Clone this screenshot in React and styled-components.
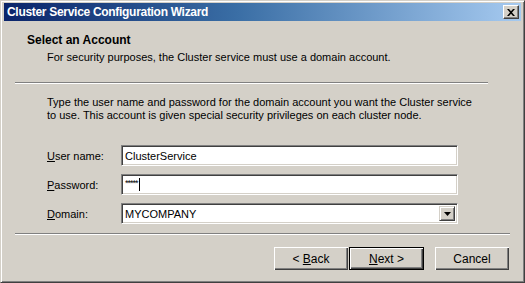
import React from "react";
import styled, { createGlobalStyle } from "styled-components";

const GlobalStyle = createGlobalStyle`
  html, body {
    margin: 0;
    padding: 0;
    background: #d4d0c8;
  }
  * {
    box-sizing: border-box;
  }
`;

const Window = styled.div`
  width: 525px;
  height: 283px;
  display: flex;
  flex-direction: column;
  background: #d4d0c8;
  border-top: 1px solid #d4d0c8;
  border-left: 1px solid #d4d0c8;
  border-right: 1px solid #404040;
  border-bottom: 1px solid #404040;
  box-shadow: inset 1px 1px 0 #ffffff, inset -1px -1px 0 #808080;
  padding: 2px 3px 3px 3px;
  font-family: "Liberation Sans", Arial, sans-serif;
  font-size: 11px;
  color: #000;
  overflow: hidden;
`;

const TitleBar = styled.div`
  height: 18px;
  flex: none;
  display: flex;
  align-items: center;
  justify-content: space-between;
  padding: 0 2px 0 2px;
  background: linear-gradient(to right, #0a246a 0%, #3a6ea5 45%, #a6caf0 100%);
`;

const TitleText = styled.span`
  color: #fff;
  font-weight: bold;
  font-size: 12px;
  letter-spacing: -0.3px;
  padding-left: 1px;
`;

const CloseButton = styled.div`
  width: 16px;
  height: 14px;
  background: #d4d0c8;
  border-top: 1px solid #ffffff;
  border-left: 1px solid #ffffff;
  border-right: 1px solid #404040;
  border-bottom: 1px solid #404040;
  box-shadow: inset -1px -1px 0 #808080;
  display: flex;
  align-items: center;
  justify-content: center;
`;

const Header = styled.div`
  padding: 11px 0 0 23px;
  height: 61px;
  flex: none;
`;

const Heading = styled.div`
  font-weight: bold;
  font-size: 12px;
  line-height: 16px;
`;

const SubHeading = styled.div`
  padding-left: 20px;
  margin-top: 2px;
  line-height: 14px;
`;

const Rule = styled.div`
  flex: none;
  margin-left: 11px;
  width: ${(p) => p.$width}px;
  height: 2px;
  border-top: 1px solid #808080;
  border-bottom: 1px solid #ffffff;
`;

const Body = styled.div`
  padding: 12px 0 9px 43px;
  flex: none;
`;

const Intro = styled.p`
  margin: 0;
  white-space: nowrap;
  line-height: 13px;
`;

const Form = styled.div`
  margin-top: 23px;
  display: grid;
  grid-template-columns: 74px 337px;
  row-gap: 8px;
  align-items: center;
`;

const Label = styled.label`
  line-height: 14px;
`;

const Field = styled.div`
  height: 21px;
  background: #fff;
  border-top: 1px solid #808080;
  border-left: 1px solid #808080;
  border-right: 1px solid #ffffff;
  border-bottom: 1px solid #ffffff;
  box-shadow: inset 1px 1px 0 #404040, inset -1px -1px 0 #d4d0c8;
  display: flex;
  align-items: center;
  padding-left: 3px;
  position: relative;
`;

const Caret = styled.span`
  display: inline-block;
  width: 1px;
  height: 13px;
  background: #000;
  margin-left: 1px;
`;

const Stars = styled.span`
  font-size: 9px;
  letter-spacing: -1px;
  position: relative;
  top: -2px;
`;

const DropButton = styled.div`
  position: absolute;
  right: 2px;
  top: 2px;
  width: 16px;
  height: 15px;
  background: #d4d0c8;
  border-top: 1px solid #d4d0c8;
  border-left: 1px solid #d4d0c8;
  border-right: 1px solid #404040;
  border-bottom: 1px solid #404040;
  box-shadow: inset 1px 1px 0 #fff, inset -1px -1px 0 #808080;
  display: flex;
  align-items: center;
  justify-content: center;
`;

const Footer = styled.div`
  display: flex;
  justify-content: flex-end;
  padding: 12px 12px 0 0;
`;

const Button = styled.div`
  width: ${(p) => (p.$default ? 75 : 74)}px;
  height: 23px;
  margin-left: ${(p) => p.$gap || 0}px;
  display: flex;
  align-items: center;
  justify-content: center;
  font-size: 12px;
  background: #d4d0c8;
  border: ${(p) => (p.$default ? "1px solid #000" : "none")};
  box-shadow: inset 1px 1px 0 #fff, inset -1px -1px 0 #404040, inset -2px -2px 0 #808080;
`;

const U = styled.span`
  text-decoration: underline;
`;

const App = () => {
  return (
    <>
      <GlobalStyle />
      <Window>
        <TitleBar>
          <TitleText>Cluster Service Configuration Wizard</TitleText>
          <CloseButton>
            <svg width="8" height="7" viewBox="0 0 8 7">
              <path d="M0 0h2l2 2.2L6 0h2L5 3.5 8 7H6L4 4.8 2 7H0l3-3.5z" fill="#000" />
            </svg>
          </CloseButton>
        </TitleBar>
        <Header>
          <Heading>Select an Account</Heading>
          <SubHeading>
            For security purposes, the Cluster service must use a domain account.
          </SubHeading>
        </Header>
        <Rule $width={473} />
        <Body>
          <Intro>
            Type the user name and password for the domain account you want the Cluster service
            <br />
            to use. This account is given special security privileges on each cluster node.
          </Intro>
          <Form>
            <Label>
              <U>U</U>ser name:
            </Label>
            <Field>ClusterService</Field>
            <Label>
              <U>P</U>assword:
            </Label>
            <Field>
              <Stars>*****</Stars>
              <Caret />
            </Field>
            <Label>
              <U>D</U>omain:
            </Label>
            <Field>
              MYCOMPANY
              <DropButton>
                <svg width="7" height="4" viewBox="0 0 7 4">
                  <path d="M0 0h7L3.5 4z" fill="#000" />
                </svg>
              </DropButton>
            </Field>
          </Form>
        </Body>
        <Rule $width={495} />
        <Footer>
          <Button>
            &lt;&nbsp;<U>B</U>ack
          </Button>
          <Button $default $gap={1}>
            <U>N</U>ext &gt;
          </Button>
          <Button $gap={11}>Cancel</Button>
        </Footer>
      </Window>
    </>
  );
};

export default App;
